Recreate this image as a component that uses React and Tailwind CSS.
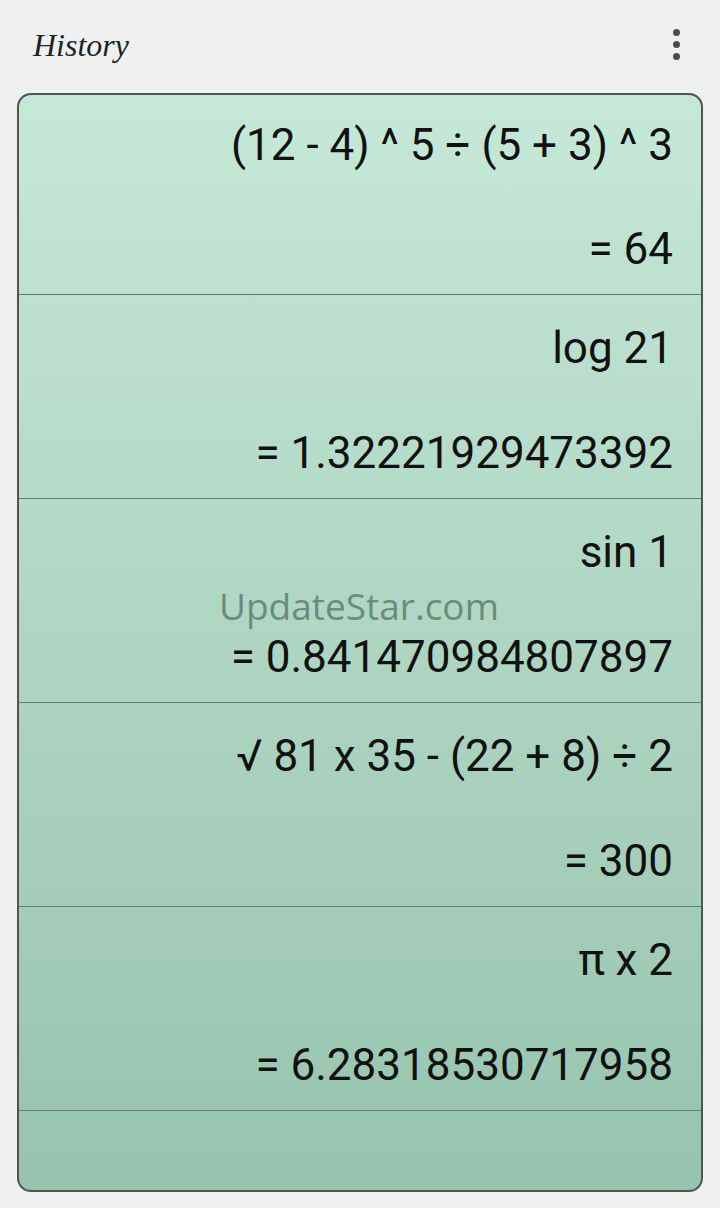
import React from "react";

const rows = [
  ["(12 - 4) ^ 5 ÷ (5 + 3) ^ 3", "= 64"],
  ["log 21", "= 1.32221929473392"],
  ["sin 1", "= 0.841470984807897"],
  ["√ 81 x 35 - (22 + 8) ÷ 2", "= 300"],
  ["π x 2", "= 6.28318530717958"],
];

export default function App() {
  return (
    <div className="w-[720px] h-[1208px] bg-[#eff0f2] flex flex-col" style={{ fontFamily: "Roboto, sans-serif" }}>
      <div className="h-[93px] flex items-start justify-between pl-[33px] pr-[40px]">
        <div className="mt-[25px] text-[32px] italic text-[#222] leading-[40px]" style={{ fontFamily: '"Liberation Serif", serif' }}>
          History
        </div>
        <div className="mt-[29px] flex flex-col gap-[5px]">
          <span className="w-[7px] h-[7px] rounded-full bg-[#4a4a4a]"></span>
          <span className="w-[7px] h-[7px] rounded-full bg-[#4a4a4a]"></span>
          <span className="w-[7px] h-[7px] rounded-full bg-[#4a4a4a]"></span>
        </div>
      </div>
      <div className="relative mx-[17px] h-[1099px] border-2 border-[#4f5552] rounded-[14px] overflow-hidden bg-gradient-to-b from-[#c6e8d8] to-[#97c4ae]">
        {rows.map(([expr, res], i) => (
          <div key={i} className={(i === 0 ? "h-[200px] " : "h-[204px] ") + "border-b border-[#5e7d6d] flex flex-col pr-[28px] text-right text-[44px] text-[#111]"}>
            <div className={(i === 0 ? "h-[97px] pt-[2px] " : "h-[101px] pt-[4px] ") + "flex items-center justify-end"}>{expr}</div>
            <div className="h-[102px] pt-[12px] flex items-center justify-end leading-[52px]">{res}</div>
          </div>
        ))}
        <div className="absolute left-[200px] top-[492px] text-[37px] text-[#6a8c7a] leading-none" style={{ fontFamily: '"Open Sans", sans-serif' }}>
          UpdateStar.com
        </div>
      </div>
    </div>
  );
}
